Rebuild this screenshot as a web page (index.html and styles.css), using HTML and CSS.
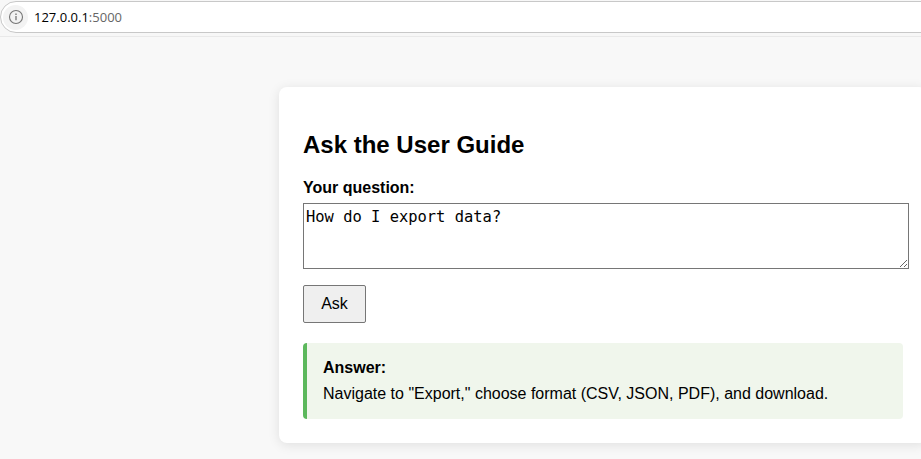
FILE: index.html
```html
<!DOCTYPE html>
<html lang="en">
<head>
<meta charset="utf-8">
<title>Ask the User Guide</title>
<link rel="stylesheet" href="styles.css">
</head>
<body>
<header class="toolbar">
  <div class="address">
    <span class="info">
      <svg width="16" height="16" viewBox="0 0 16 16" fill="none" stroke="#767676">
        <circle cx="8" cy="8" r="6.5" stroke-width="1.1"/>
        <path d="M8 7v4.2" stroke-width="1.3"/>
        <path d="M8 4.6v1.4" stroke-width="1.4"/>
      </svg>
    </span>
    <span class="url">127.0.0.1<span class="port">:5000</span></span>
  </div>
</header>
<main class="card">
  <h2>Ask the User Guide</h2>
  <form>
    <label for="question">Your question:</label>
    <textarea id="question" spellcheck="false">How do I export data?</textarea>
    <button type="button">Ask</button>
  </form>
  <section class="answer">
    <strong>Answer:</strong>
    <div>Navigate to "Export," choose format (CSV, JSON, PDF), and download.</div>
  </section>
</main>
</body>
</html>
```
FILE: styles.css
```css
body {
  margin: 0;
  height: 459px;
  overflow: hidden;
  background: #f8f8f8;
  color: #000;
  font: 16px/18px "Liberation Sans", Arial, sans-serif;
}

.toolbar {
  box-sizing: border-box;
  height: 37px;
  padding-top: 1px;
  border-bottom: 1px solid #e9e9e9;
  background: #f7f7f7;
}

.address {
  box-sizing: border-box;
  display: flex;
  align-items: center;
  width: 960px;
  height: 32px;
  padding-left: 2px;
  border: 1px solid #c8c8c8;
  border-radius: 16px;
  background: #fff;
}

.info {
  display: flex;
  align-items: center;
  justify-content: center;
  width: 25px;
  height: 25px;
  border-radius: 50%;
  background: #f3f3f3;
}

.url {
  margin-left: 6px;
  font: 13px/18px "Open Sans", "Noto Sans", sans-serif;
}

.port {
  color: #666;
}

.card {
  box-sizing: border-box;
  width: 648px;
  height: 356px;
  margin: 50px 0 0 279px;
  padding: 24px;
  border-radius: 8px;
  background: #fff;
  box-shadow: 0 2px 12px rgba(0, 0, 0, 0.1);
}

h2 {
  margin: 20px 0;
  font-size: 24px;
  line-height: 28px;
}

label {
  display: block;
  margin-bottom: 6px;
  font-weight: bold;
}

textarea {
  box-sizing: border-box;
  display: block;
  width: 606px;
  height: 66px;
  margin: 0;
  padding: 3px 2px 2px;
  border: 1px solid #767676;
  font: 15.45px/20px "DejaVu Sans Mono", monospace;
  color: #000;
}

button {
  display: block;
  box-sizing: border-box;
  width: 63px;
  height: 38px;
  margin: 16px 0 0;
  padding: 0;
  border: 1px solid #767676;
  border-radius: 2px;
  background: #efefef;
  color: #000;
  font: 16px/18px "Liberation Sans", Arial, sans-serif;
}

.answer {
  box-sizing: border-box;
  height: 76px;
  margin-top: 20px;
  padding: 12px 16px;
  border-left: 4px solid #5cb85c;
  border-radius: 4px;
  background: #f0f6ec;
  line-height: 26px;
}

.answer strong {
  display: block;
}
```
